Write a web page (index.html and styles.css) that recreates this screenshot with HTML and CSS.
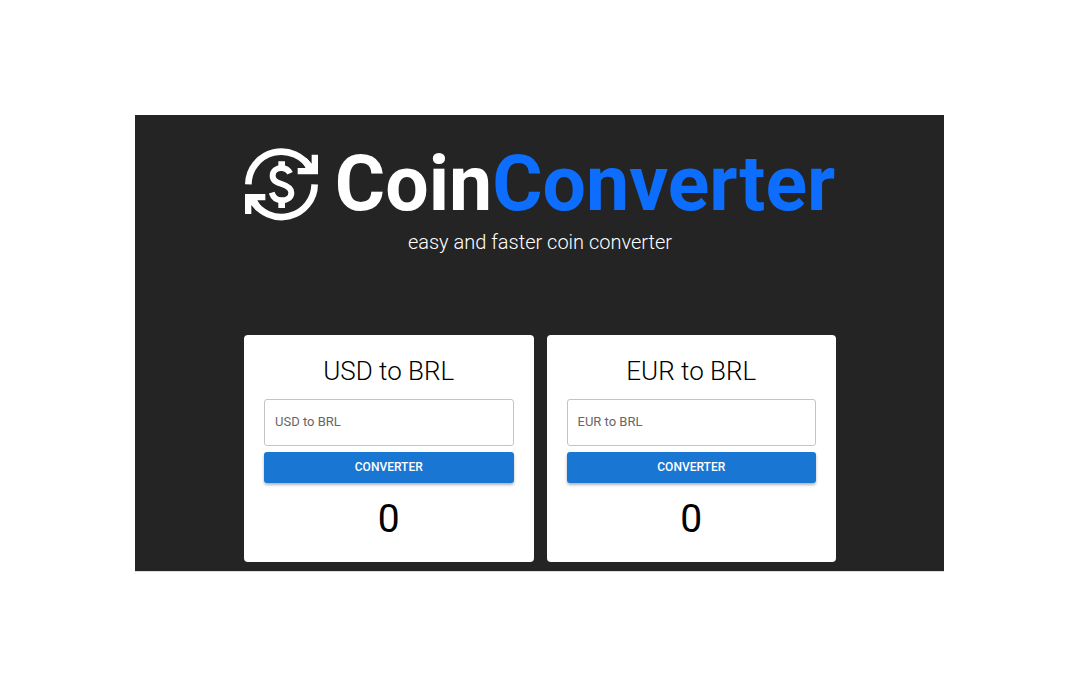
FILE: index.html
```html
<!DOCTYPE html>
<html lang="en">
<head>
<meta charset="utf-8">
<meta name="viewport" content="width=device-width, initial-scale=1">
<title>CoinConverter</title>
<link rel="stylesheet" href="styles.css">
</head>
<body>
<main class="app">
  <header class="header">
    <h1 class="brand">
      <svg class="logo" viewBox="0 0 219 219" aria-hidden="true">
        <g fill="none" stroke="#fff" stroke-width="20">
          <path d="M10 109A99.500 99.500 0 0 1 197 63"/>
          <path d="M209 109A99.500 99.500 0 0 1 22 155"/>
          <path stroke-width="18" d="M135 76C130 65 121 60 109 60C95 60 83 69 83 83C83 98 95 103 110 108C126 113 139 119 139 134C139 149 126 157 109 157C95 157 85 149 80 134"/>
        </g>
        <g fill="#fff">
          <path d="M200 20H219V79H158V60H182L172 43L185 30L200 47Z"/>
          <path d="M19 198H0V138H61V157H37L47 175L34 188L19 171Z"/>
          <path d="M100 40H120V60H100ZM100 158H120V180H100Z"/>
        </g>
      </svg>
      <span>Coin<span class="accent">Converter</span></span>
    </h1>
    <p class="tagline">easy and faster coin converter</p>
  </header>
  <div class="cards">
    <form class="card">
      <h2 class="title">USD to BRL</h2>
      <input class="field" type="text" aria-label="USD to BRL" placeholder="USD to BRL">
      <button class="button" type="button">CONVERTER</button>
      <output class="result">0</output>
    </form>
    <form class="card">
      <h2 class="title">EUR to BRL</h2>
      <input class="field" type="text" aria-label="EUR to BRL" placeholder="EUR to BRL">
      <button class="button" type="button">CONVERTER</button>
      <output class="result">0</output>
    </form>
  </div>
</main>
</body>
</html>
```
FILE: styles.css
```css
* { box-sizing: border-box; }
body {
  margin: 0;
  padding: 115px 136px 114px 135px;
  background: #fff;
  font-family: Roboto, sans-serif;
}
.app {
  padding: 23px 108px 9px 109px;
  background: #242424;
  border-bottom: 1px solid #dcdcdc;
}
.header {
  display: flex;
  flex-direction: column;
  align-items: center;
  color: #fff;
}
.brand {
  display: flex;
  align-items: center;
  gap: 17px;
  margin: 0;
  font-size: 77px;
  line-height: 92px;
  font-weight: 700;
  white-space: nowrap;
}
.logo { width: 73px; height: 73px; flex: none; }
.accent { color: #0d6efd; }
.tagline {
  margin: 0;
  font-size: 20px;
  line-height: 24px;
  font-weight: 300;
}
.cards {
  display: grid;
  grid-template-columns: 1fr 1fr;
  gap: 13px;
  margin-top: 81px;
}
.card {
  display: flex;
  flex-direction: column;
  padding: 20px;
  background: #fff;
  border-radius: 4px;
}
.title {
  margin: 0 0 12px;
  font-size: 26px;
  line-height: 32px;
  font-weight: 300;
  text-align: center;
  color: #000;
}
.field {
  width: 100%;
  height: 47px;
  margin: 0 0 6px;
  padding: 0 10px 2px;
  border: 1px solid #c4c4c4;
  border-radius: 3px;
  background: #fff;
  font: 400 13px Roboto, sans-serif;
  color: #000;
}
.field::placeholder { color: #666; opacity: 1; }
.button {
  height: 31px;
  padding: 0 12px 2px;
  border: 0;
  border-radius: 3px;
  background: #1976d2;
  color: #fff;
  font: 500 12px Roboto, sans-serif;
  box-shadow: 0 2px 3px rgba(0, 0, 0, 0.3);
}
.result {
  margin-top: 13px;
  font-size: 39px;
  line-height: 46px;
  text-align: center;
  color: #000;
}
```
